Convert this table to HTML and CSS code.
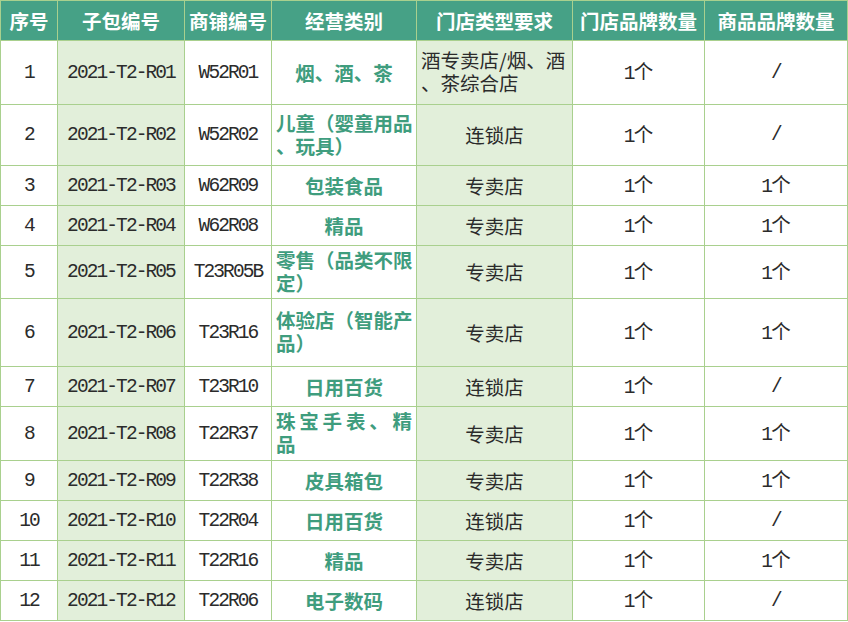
FILE: index.html
```html
<!DOCTYPE html>
<html lang="zh-CN">
<head>
<meta charset="utf-8">
<title>商铺招商表</title>
<link rel="stylesheet" href="styles.css">
</head>
<body>
<table class="grid">
  <colgroup>
    <col class="c1"><col class="c2"><col class="c3"><col class="c4"><col class="c5"><col class="c6"><col class="c7">
  </colgroup>
  <thead>
    <tr class="h40">
      <th>序号</th><th>子包编号</th><th>商铺编号</th><th>经营类别</th><th>门店类型要求</th><th>门店品牌数量</th><th>商品品牌数量</th>
    </tr>
  </thead>
  <tbody>
    <tr class="h64">
      <td class="m">1</td><td class="m sh">2021-T2-R01</td><td class="m">W52R01</td><td class="cat">烟、酒、茶</td><td class="sh wrap">酒专卖店/烟、酒、茶综合店</td><td><span class="m">1</span>个</td><td class="m">/</td>
    </tr>
    <tr class="h61">
      <td class="m">2</td><td class="m sh">2021-T2-R02</td><td class="m">W52R02</td><td class="cat wrap">儿童（婴童用品、玩具）</td><td class="sh">连锁店</td><td><span class="m">1</span>个</td><td class="m">/</td>
    </tr>
    <tr class="h40">
      <td class="m">3</td><td class="m sh">2021-T2-R03</td><td class="m">W62R09</td><td class="cat">包装食品</td><td class="sh">专卖店</td><td><span class="m">1</span>个</td><td><span class="m">1</span>个</td>
    </tr>
    <tr class="h40">
      <td class="m">4</td><td class="m sh">2021-T2-R04</td><td class="m">W62R08</td><td class="cat">精品</td><td class="sh">专卖店</td><td><span class="m">1</span>个</td><td><span class="m">1</span>个</td>
    </tr>
    <tr class="h53">
      <td class="m">5</td><td class="m sh">2021-T2-R05</td><td class="m">T23R05B</td><td class="cat wrap">零售（品类不限定）</td><td class="sh">专卖店</td><td><span class="m">1</span>个</td><td><span class="m">1</span>个</td>
    </tr>
    <tr class="h68">
      <td class="m">6</td><td class="m sh">2021-T2-R06</td><td class="m">T23R16</td><td class="cat wrap">体验店（智能产品）</td><td class="sh">专卖店</td><td><span class="m">1</span>个</td><td><span class="m">1</span>个</td>
    </tr>
    <tr class="h40">
      <td class="m">7</td><td class="m sh">2021-T2-R07</td><td class="m">T23R10</td><td class="cat">日用百货</td><td class="sh">连锁店</td><td><span class="m">1</span>个</td><td class="m">/</td>
    </tr>
    <tr class="h54">
      <td class="m">8</td><td class="m sh">2021-T2-R08</td><td class="m">T22R37</td><td class="cat wrap"><div class="spread"><span>珠</span><span>宝</span><span>手</span><span>表</span><span>、</span><span>精</span></div><div>品</div></td><td class="sh">专卖店</td><td><span class="m">1</span>个</td><td><span class="m">1</span>个</td>
    </tr>
    <tr class="h40">
      <td class="m">9</td><td class="m sh">2021-T2-R09</td><td class="m">T22R38</td><td class="cat">皮具箱包</td><td class="sh">专卖店</td><td><span class="m">1</span>个</td><td><span class="m">1</span>个</td>
    </tr>
    <tr class="h40">
      <td class="m">10</td><td class="m sh">2021-T2-R10</td><td class="m">T22R04</td><td class="cat">日用百货</td><td class="sh">连锁店</td><td><span class="m">1</span>个</td><td class="m">/</td>
    </tr>
    <tr class="h40">
      <td class="m">11</td><td class="m sh">2021-T2-R11</td><td class="m">T22R16</td><td class="cat">精品</td><td class="sh">专卖店</td><td><span class="m">1</span>个</td><td><span class="m">1</span>个</td>
    </tr>
    <tr class="h40">
      <td class="m">12</td><td class="m sh">2021-T2-R12</td><td class="m">T22R06</td><td class="cat">电子数码</td><td class="sh">连锁店</td><td><span class="m">1</span>个</td><td class="m">/</td>
    </tr>
  </tbody>
</table>
</body>
</html>
```
FILE: styles.css
```css
html, body {
  margin: 0;
  padding: 0;
  background: #ffffff;
}

.grid {
  border-collapse: collapse;
  table-layout: fixed;
  width: 847px;
  font-family: "Noto Sans CJK SC", "Liberation Mono", sans-serif;
  font-size: 19.5px;
  color: #2b2b2b;
}

.c1 { width: 57px; }
.c2 { width: 127px; }
.c3 { width: 87px; }
.c4 { width: 145px; }
.c5 { width: 156px; }
.c6 { width: 132px; }
.c7 { width: 143px; }

.grid th,
.grid td {
  border: 1px solid #a9d08e;
  padding: 0;
  text-align: center;
  vertical-align: middle;
  line-height: 24px;
  overflow: hidden;
}

.grid th {
  background: #46a186;
  color: #ffffff;
  font-weight: 700;
}

.h40 { height: 40px; }
.h64 { height: 64px; }
.h61 { height: 61px; }
.h53 { height: 53px; }
.h68 { height: 68px; }
.h54 { height: 54px; }

.m {
  font-family: "Liberation Mono", monospace;
  letter-spacing: -1.9px;
  font-weight: 400;
}

.sh {
  background: #e2efda;
}

.cat {
  color: #3f9d7e;
  font-weight: 700;
}

.grid td.wrap {
  text-align: left;
  padding: 0 1px 3px 4px;
  line-height: 23px;
  vertical-align: middle;
  line-break: anywhere;
}

.spread {
  display: flex;
  justify-content: space-between;
  padding-right: 3px;
}
```
